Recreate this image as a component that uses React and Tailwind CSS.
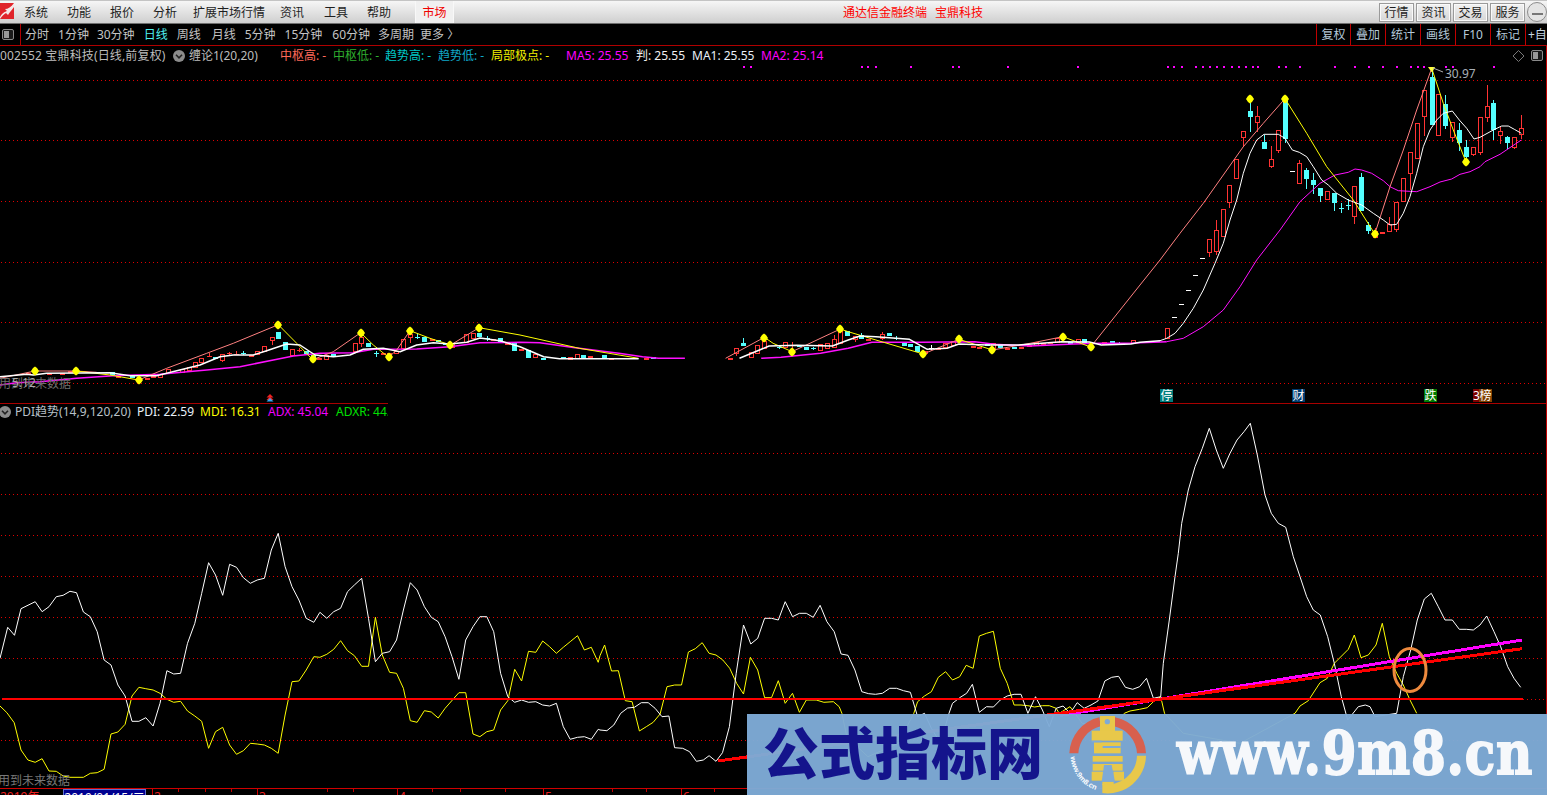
import React from "react";

const z4 = (p) => p.map(([x, y]) => [1140 + x / 3, 60 + y / 3]);
const z5 = (p) => p.map(([x, y]) => [x / 3, 310 + y / 3]);
const z6 = (p) => p.map(([x, y]) => [520 + x / 2.529, 310 + y / 3]);
const z10 = (p) => p.map(([x, y]) => [1140 + x / 3, 380 + y / 3]);
const z11 = (p) => p.map(([x, y]) => [x / 2.613, 410 + y / 3]);
const z12 = (p) => p.map(([x, y]) => [600 + x / 2.613, 570 + y / 3]);
const str = (p) => p.map(([x, y]) => `${x.toFixed(1)},${y.toFixed(1)}`).join(" ");

/* lower indicator */
const lowerWhite = [
  ...z11([[0,745],[20,652],[38,676],[55,596],[92,575],[110,605],[128,590],[147,560],[165,556],[183,544],[200,548],[218,606],[236,620],[254,665],[272,750],[290,765],[308,825],[327,858],[345,934],[363,934],[381,923],[400,948],[418,880],[436,782],[454,792],[472,790],[490,700],[509,640],[527,550],[545,458],[563,495],[582,556],[600,463],[618,472],[636,503],[654,520],[672,510],[691,505],[709,420],[727,370],[745,470],[763,530],[781,570],[800,625],[820,637],[836,607],[854,625],[872,605],[890,595],[908,545],[926,525],[945,505],[963,625],[981,755],[999,730],[1018,725],[1036,690],[1054,600],[1072,518],[1090,540],[1109,590],[1127,622],[1145,635],[1163,680],[1181,740],[1199,808],[1217,690],[1236,650],[1254,620],[1272,620],[1290,665],[1308,790],[1327,860],[1345,877],[1363,870],[1381,877],[1400,875],[1418,885],[1436,888],[1454,880],[1472,950],[1490,988],[1509,982],[1527,980],[1545,988],[1563,958]]),
  ...z12([[0,480],[18,482],[36,465],[54,430],[72,414],[90,412],[108,398],[126,398],[144,415],[162,440],[180,438],[195,533],[216,535],[234,545],[252,574],[270,570],[285,557],[303,574],[320,548],[338,470],[356,310],[375,165],[394,222],[412,205],[430,145],[448,145],[466,150],[484,95],[503,140],[521,130],[539,130],[557,142],[575,106],[593,155],[612,185],[630,252],[648,256],[666,300],[684,365],[702,371],[720,373],[738,370],[757,355],[775,355],[793,362],[811,367],[830,440],[848,430],[866,475],[890,520],[912,430],[921,400],[940,383],[958,370],[973,343],[991,427],[1010,410],[1028,411],[1046,390],[1064,378],[1082,373],[1100,373],[1118,430],[1138,380],[1156,420],[1174,470],[1192,415],[1210,408],[1228,430],[1247,398],[1265,415],[1283,405],[1301,393],[1319,333],[1337,322],[1355,319],[1373,352],[1392,358],[1410,350],[1428,325],[1446,385],[1465,380]]),
  ...z10([[70,850],[88,720],[105,590],[115,520],[125,430],[145,330],[165,260],[187,205],[208,145],[229,210],[250,265],[270,220],[291,180],[312,155],[331,130],[352,225],[375,345],[394,400],[415,430],[437,442],[460,530],[480,590],[500,650],[520,690],[541,705],[563,770],[583,850],[604,950],[623,1020],[655,980],[676,975],[690,980],[705,1010],[770,1000],[790,890],[812,810],[832,720],[853,657],[874,640],[895,680],[915,720],[937,720],[958,748],[979,748],[1000,750],[1020,735],[1040,708],[1062,755],[1082,800],[1103,860],[1122,895],[1142,922]]),
];
const lowerYellow = [
  ...z11([[0,888],[18,908],[37,938],[55,1020],[73,1050],[92,1057],[110,1046],[128,1083],[147,1084],[165,1098],[183,1102],[218,1102],[236,1090],[254,1088],[272,1078],[290,972],[308,966],[327,943],[345,858],[363,832],[381,836],[400,840],[418,850],[436,868],[454,877],[472,874],[490,903],[509,918],[527,934],[545,1015],[563,965],[582,952],[600,1005],[618,1033],[636,1022],[654,1000],[672,1002],[691,1005],[709,1015],[727,1030],[745,915],[763,815],[781,813],[800,780],[820,740],[836,742],[854,733],[872,718],[890,692],[908,722],[926,737],[945,769],[963,769],[981,622],[999,735],[1018,787],[1036,790],[1054,835],[1072,932],[1090,937],[1109,902],[1127,906],[1145,924],[1163,895],[1199,848],[1217,848],[1236,972],[1254,980],[1272,965],[1290,960],[1308,900],[1327,872],[1345,778],[1363,813],[1381,724],[1400,727],[1418,693],[1436,710],[1454,730],[1472,712],[1490,695],[1509,677],[1527,720],[1545,712],[1563,757]]),
  ...z12([[0,257],[12,225],[30,303],[48,302],[66,392],[84,395],[103,483],[121,470],[139,457],[157,432],[175,350],[195,345],[213,345],[231,246],[249,236],[267,218],[285,250],[303,255],[321,270],[339,295],[357,340],[375,372],[393,262],[412,300],[430,383],[448,383],[466,332],[484,400],[503,370],[521,427],[539,390],[565,390],[585,397],[610,395],[625,410],[632,430],[645,500],[700,560],[780,520],[820,430],[830,395],[848,378],[866,365],[884,322],[903,305],[921,330],[940,320],[957,286],[975,295],[991,198],[1010,190],[1028,184],[1046,295],[1064,340],[1082,405],[1100,405],[1118,407],[1136,411],[1156,407],[1174,407],[1192,415],[1200,430],[1228,410],[1260,460],[1340,480],[1370,430],[1385,423],[1410,418],[1430,413],[1446,395],[1465,380],[1475,430]]),
  ...z10([[130,1060],[300,1090],[465,1000],[480,978],[505,962],[540,908],[562,895],[583,850],[625,808],[643,765],[663,833],[685,825],[708,795],[727,730],[748,830],[770,880],[790,915],[810,960],[830,1000]]),
];

/* upper chart lines: left side is drawn heavier than the right */
const upWhiteLeft = [
  z5([[0,200],[80,193],[100,195],[140,190],[330,188],[390,197],[470,197],[500,190],[600,165],[660,140],[700,135],[760,135],[800,122],[860,102],[900,105],[945,135],[1000,140],[1050,135],[1090,118],[1150,115],[1200,125],[1250,105],[1300,98],[1350,102],[1400,97],[1440,84],[1500,92],[1560,110]]).concat(
    z6([[60,140],[100,146],[230,146],[300,146]])),
  z6([[555,145],[630,108],[700,106],[790,108],[830,90],[860,78],[900,80],[985,88],[1030,118],[1080,115],[1110,102],[1180,105],[1260,105],[1370,95],[1440,96],[1470,105],[1545,102]]).concat(
    z4([[0,847],[60,842]])),
];
const upWhiteRight = z4([[60,842],[80,835],[105,820],[130,790],[160,745],[190,690],[225,610],[250,550],[270,480],[290,420],[310,340],[330,280],[350,240],[372,223],[415,223],[435,235],[457,270],[478,277],[500,290],[520,320],[545,360],[565,375],[590,400],[625,420],[665,435],[700,460],[730,480],[750,495],[770,493],[790,460],[810,410],[830,340],[850,260],[870,210],[890,180],[910,160],[937,153],[958,180],[980,205],[1002,237],[1020,232],[1060,210],[1085,198],[1105,198],[1123,208],[1144,220]]);
const upMagentaLeft = [
  z5([[0,225],[50,218],[120,215],[230,205],[340,197],[480,193],[620,180],[720,170],[820,150],[880,138],[960,130],[1060,128],[1120,118],[1250,117],[1350,110],[1440,98]]).concat(
    z6([[0,97],[50,98],[130,112],[250,130],[310,140],[350,145],[417,145]])),
  z6([[610,145],[660,142],[760,130],[830,115],[890,97],[1015,97],[1150,95],[1200,103],[1290,108],[1400,102],[1470,100],[1545,100]]).concat(
    z4([[0,848],[80,845]])),
];
const upMagentaRight = z4([[80,845],[130,835],[190,800],[250,750],[300,680],[350,600],[420,510],[480,425],[540,370],[585,345],[625,337],[645,327],[665,330],[695,340],[730,362],[750,380],[775,392],[830,395],[870,380],[900,366],[935,357],[960,343],[990,335],[1020,320],[1035,305],[1080,283],[1144,240]]);
const upPink = [
  z5([[0,205],[105,183],[228,183],[290,187]]),
  z5([[416,210],[500,175],[620,130],[700,100],[835,44]]),
  z5([[938,149],[1000,125],[1082,68]]),
  z5([[1166,142],[1190,120],[1230,62]]),
  z5([[1352,105],[1437,53]]),
  z6([[520,145],[618,82]]),
  z6([[688,125],[810,57]]),
  z6([[1020,132],[1110,88]]),
  z6([[1195,120],[1290,100],[1373,80]]),
  z6([[1443,111]]).concat(z4([[0,675],[60,600],[120,520],[190,430],[250,345],[310,260],[370,190],[435,116]])),
  z4([[705,520],[750,380],[790,270],[830,150],[875,25]]),
];
const upYellow = [
  z5([[228,183],[330,195],[416,210]]),
  z5([[835,44],[890,100],[938,149]]),
  z5([[1082,68],[1120,105],[1166,142]]),
  z5([[1230,62],[1290,85],[1352,105]]),
  z5([[1437,53],[1560,75]]).concat(z6([[150,115],[300,145]])),
  z6([[618,82],[640,100],[688,125]]),
  z6([[810,57],[830,65],[900,90],[1020,132]]),
  z6([[1110,88],[1195,120]]),
  z6([[1373,80],[1443,111]]),
  z4([[435,116],[500,220],[560,320],[640,420],[705,523]]),
  z4([[875,25],[910,130],[940,210],[978,306]]),
];

/* candles: [X, top, bottom, type, wickTop, wickBottom] */
const c4 = [
  [82,805,835,"r"],[101,772,772,"w"],[122,733,733,"w"],[143,691,691,"w"],[164,646,646,"w"],[185,595,595,"w"],
  [208,538,575,"r",538,590],[229,511,572,"r",480,585],[250,448,527,"r"],[268,376,425,"r",376,445],[289,298,353,"r"],
  [310,214,230,"r",214,262],[331,153,171,"c",116,216],[352,169,185,"r",138,215],[373,246,267,"c",225,267],
  [394,298,317,"r",258,323],[415,211,269,"r",210,278],[436,116,238,"c",116,250],[457,334,334,"w"],[478,310,370,"r",300,370],
  [499,330,357,"c",325,387],[520,360,375,"c",340,402],[541,385,408,"c",385,426],[562,394,416,"r"],[583,400,429,"c",400,452],
  [604,443,443,"c",430,458],[625,434,434,"c",418,450],[643,379,467,"r",379,492],[664,351,453,"c",340,453],
  [685,495,513,"c",485,521],[706,512,530,"r",505,530],[727,515,515,"r"],[748,492,512,"r",472,512],[769,427,506,"r",427,515],
  [790,355,422,"r"],[811,275,338,"r",275,390],[832,188,293,"r"],[853,91,169,"r",91,228],[875,51,194,"c",30,194],
  [895,103,224,"r"],[916,133,197,"c",105,207],[937,187,231,"r",187,246],[958,210,248,"c",190,272],[979,261,292,"c",240,300],
  [1000,260,281,"r",260,288],[1021,172,275,"r",172,285],[1040,139,172,"r",75,185],[1060,129,210,"c",120,240],
  [1081,214,226,"r",202,252],[1102,232,250,"c",228,268],[1123,230,262,"r",230,266],[1144,203,223,"r",165,238],
];
const c5 = [
  [85,190,190,"r"],[148,190,190,"r"],[185,188,188,"r"],[210,184,184,"r"],[290,186,186,"w"],[335,186,195,"c"],[355,198,198,"r"],
  [397,195,205,"c"],[440,205,205,"r"],[460,197,197,"r"],[480,192,200,"r"],[503,178,188,"r"],[545,178,186,"r"],[566,170,180,"r"],
  [584,157,170,"r"],[604,145,155,"r"],[626,138,138,"r",130,142],[646,140,148,"c"],[667,133,150,"r",133,155],[688,130,130,"r",125,135],
  [709,132,132,"r",122,135],[730,130,130,"c",124,136],[752,135,135,"r"],[772,122,132,"r"],[793,109,122,"r"],[815,80,90,"r",80,105],
  [835,65,87,"c"],[856,97,120,"c"],[877,118,135,"r"],[898,120,120,"r",114,126],[919,122,132,"c"],[940,135,150,"c"],[958,143,143,"r"],
  [979,135,146,"r"],[1000,132,132,"c"],[1064,100,123,"r"],[1084,80,100,"r",80,110],[1105,98,112,"c"],[1127,130,130,"c",123,140],
  [1148,130,130,"r"],[1168,130,140,"r"],[1189,122,130,"r"],[1210,88,113,"r"],[1231,72,82,"r",72,100],[1252,80,80,"c",73,87],
  [1273,80,95,"c"],[1295,88,88,"r"],[1315,90,97,"c"],[1335,100,106,"c"],[1355,100,112,"r"],[1397,73,95,"r"],[1418,68,85,"r"],
  [1438,70,80,"c"],[1460,85,85,"c",79,92],[1480,86,86,"r"],[1501,85,95,"c"],[1522,98,98,"r"],[1543,95,122,"c"],
];
const c6 = [
  [3,118,118,"r"],[21,120,143,"c"],[39,133,140,"r"],[57,143,143,"c"],[109,140,147,"c"],[127,140,147,"r"],[145,132,143,"r"],
  [160,136,143,"c"],[178,139,139,"r"],[213,135,147,"c"],[231,144,144,"r"],[319,145,145,"r"],[337,142,146,"c"],
  [530,143,148,"r"],[547,115,130,"r",115,137],[565,98,108,"c",85,108],[583,125,140,"r"],[600,106,130,"r"],[618,93,114,"r"],
  [654,110,110,"c",104,118],[671,97,112,"r"],[688,105,105,"r",97,130],[706,104,110,"c"],[724,110,120,"c"],[742,115,115,"c",110,120],
  [759,102,120,"r"],[777,100,113,"r"],[795,87,110,"r",75,110],[810,60,100,"r"],[828,62,78,"c"],[846,78,86,"r",78,95],[863,76,87,"c",70,87],
  [881,86,86,"r"],[916,73,85,"r",65,90],[934,70,79,"c"],[952,85,85,"c",79,90],[970,95,107,"c"],[987,103,110,"c"],[1005,108,127,"c"],
  [1023,122,130,"r"],[1040,113,113,"w",105,120],[1058,115,115,"r"],[1076,100,110,"r"],[1094,93,105,"r"],[1145,108,108,"r"],
  [1162,110,110,"r"],[1180,103,108,"c"],[1197,100,115,"r"],[1215,105,113,"c"],[1232,113,113,"r"],[1250,110,110,"c"],[1268,110,110,"r"],
  [1286,105,105,"r"],[1304,95,105,"r"],[1322,98,98,"r"],[1340,95,95,"r"],[1357,85,97,"r"],[1392,95,95,"c"],[1410,88,96,"r"],
  [1427,87,100,"c"],[1478,96,103,"r"],[1496,93,100,"c"],[1514,100,100,"c",96,104],[1550,91,100,"r"],
];

const RED = "#ff3333", CY = "#54ffff";
function Candle({ d, map }) {
  const [X, t, b, type, wt, wb] = d;
  const [[x0, y1], [, y2]] = map([[X, t], [X, b]]);
  const x = Math.round(x0) + 0.5;
  const top = Math.round(y1), bot = Math.round(y2);
  const col = type === "r" ? RED : type === "c" ? CY : "#ffffff";
  const wick = wt !== undefined ? map([[X, wt], [X, wb]]) : null;
  return (
    <g shapeRendering="crispEdges">
      {wick && <line x1={x} x2={x} y1={Math.round(wick[0][1])} y2={Math.round(wick[1][1])} stroke={col} />}
      {top === bot ? (
        <rect x={x - 2.5} y={top} width={5} height={type === "w" ? 1 : wick ? 1 : 2} fill={col} />
      ) : type === "c" ? (
        <rect x={x - 2.5} y={top} width={5} height={bot - top} fill={col} />
      ) : (
        <rect x={x - 2} y={top + 0.5} width={4} height={bot - top} fill="#000" stroke={col} />
      )}
    </g>
  );
}

const diamonds = [[35,371],[76,371],[139,380],[278,325],[313,359],[361,333],[389,357],[410,331],[450,345],[479,328],[764,338],[792,352],[840,329],[923,354],[959,339],[992,350],[1063,337],[1091,347],[1250,99],[1285,99],[1375,234],[1466,162]];
const magentaDots = [743,750,861,867,875,910,952,958,1007,1077,1167,1173,1181,1195,1202,1209,1216,1223,1231,1238,1245,1252,1257,1278,1285,1299,1334,1354,1368,1382,1396,1410,1417,1423,1445,1452,1493];
const upperGrid = [80, 140, 201, 262, 322];
const lowerGrid = [453, 494, 535, 576, 617, 658, 740];

const Dotted = ({ y, x1 = 1, x2 = 1545 }) => (
  <line x1={x1} x2={x2} y1={y + 0.5} y2={y + 0.5} stroke="#e00000" strokeDasharray="1 3" shapeRendering="crispEdges" />
);
const Poly = ({ pts, color, w = 1 }) => (
  <polyline points={str(pts)} fill="none" stroke={color} strokeWidth={w} strokeLinejoin="round" />
);

const CircleChevron = ({ className }) => (
  <svg width="12" height="12" viewBox="0 0 12 12" className={className}>
    <circle cx="6" cy="6" r="6" fill="#8c8c8c" />
    <path d="M3 4.8 L6 7.8 L9 4.8" fill="none" stroke="#222" strokeWidth="1.6" />
  </svg>
);
const PanelIcon = ({ className }) => (
  <svg width="12" height="11" viewBox="0 0 12 11" className={className}>
    <rect x="0.5" y="0.5" width="11" height="10" rx="1.5" fill="#1a1a1a" stroke="#8a8a8a" />
    <rect x="2" y="2" width="5" height="7" fill="#9a9a9a" />
  </svg>
);

function TopBar() {
  const menu = [["系统", "w-[43px]"], ["功能", "w-[43px]"], ["报价", "w-[43px]"], ["分析", "w-[40px]"], ["扩展市场行情", "w-[87px]"], ["资讯", "w-[44px]"], ["工具", "w-[43px]"], ["帮助", "w-[49px]"]];
  return (
    <div className="h-[24px] flex items-stretch border-t border-b border-t-[#c4c4c4] border-b-[#6e6e6e] bg-gradient-to-b from-[#f6f6f6] to-[#cfcfcf] text-[12px] text-[#1e1e1e]">
      <svg width="14" height="16" viewBox="0 0 14 16" className="mt-[2px] mr-[10px] shrink-0">
        <rect width="14" height="16" fill="#e0242a" />
        <path d="M0 14 C3 9 5 9 7 8 L5 6 C8 6 11 4 14 0 L14 4 C11 8 9 10 8 12 L6 10 C4 11 2 13 0 16 Z" fill="#f4e8e8" />
      </svg>
      {menu.map(([t, w]) => (
        <div key={t} className={`${w} shrink-0 flex items-center pt-[2px]`}>{t}</div>
      ))}
      <div className="w-[39px] shrink-0 -ml-[1px] flex items-center justify-center pt-[2px] border-x border-[#f8f8f8] bg-[#f0f0f0] text-[#f00000]">市场</div>
      <div className="ml-[389px] flex items-center pt-[2px] text-[#ff0000] shrink-0">
        <span>通达信金融终端</span>
        <span className="ml-[8px]">宝鼎科技</span>
      </div>
      <div className="flex-1" />
      <div className="flex items-center gap-[2px] shrink-0 pt-[1px]">
        {["行情", "资讯", "交易", "服务"].map((t) => (
          <div key={t} className="w-[35px] h-[19px] flex items-center justify-center border border-[#9a9a9a] bg-gradient-to-b from-[#f2f2f2] to-[#d6d6d6] shadow-[inset_0_0_0_1px_#fafafa]">{t}</div>
        ))}
      </div>
      <div className="ml-[2px] mt-[1px] w-[20px] h-[20px] shrink-0 rounded-full border border-[#8c8c8c] bg-[#e4e4e4] flex items-center justify-center">
        <div className="mt-[4px] w-[11px] h-[2px] bg-[#777]" />
      </div>
    </div>
  );
}

function Toolbar() {
  const left = [["分时", ""], ["1分钟", ""], ["30分钟", "-ml-[1px]"], ["日线", "text-[#4ff0f0]"], ["周线", ""], ["月线", "ml-[2px]"], ["5分钟", ""], ["15分钟", ""], ["60分钟", "ml-[1px]"], ["多周期", "-ml-[1px]"], ["更多 〉", "-ml-[3px]"]];
  const right = [["复权", "w-[34px]"], ["叠加", "w-[35px]"], ["统计", "w-[35px]"], ["画线", "w-[35px]"], ["F10", "w-[35px]"], ["标记", "w-[35px]"]];
  return (
    <div className="h-[22px] flex items-stretch border-b border-[#b00000] text-[12px] bg-black">
      <div className="w-[21px] shrink-0 flex items-center pl-[2px] border-r border-[#b00000]">
        <PanelIcon />
      </div>
      <div className="ml-[4px] flex items-center gap-[9px] text-[#c4c4c4]">
        {left.map(([t, c]) => (
          <span key={t} className={c}>{t}</span>
        ))}
      </div>
      <div className="flex-1" />
      {right.map(([t, w]) => (
        <div key={t} className={`${w} shrink-0 flex items-center justify-center border-l border-[#c00000] text-[#b4c8d8]`}>{t}</div>
      ))}
      <div className="w-[22px] shrink-0 overflow-hidden whitespace-nowrap flex items-center pl-[2px] border-l border-[#c00000] text-[#c4d4e0]">+自选</div>
    </div>
  );
}

function UpperChart() {
  const legend = [
    ["中枢高: -", "#ff6a5a", 53],
    ["中枢低: -", "#2fae2f", 52],
    ["趋势高: -", "#00c8c8", 53],
    ["趋势低: -", "#10a8c8", 53],
    ["局部极点: -", "#f0f000", 75],
  ];
  return (
    <div className="relative h-[358px] overflow-hidden">
      <svg width="1547" height="358" viewBox="0 46 1547 358" className="absolute inset-0">
        {upperGrid.map((y) => <Dotted key={y} y={y} />)}
        <Dotted y={383} x2={387} />
        <Dotted y={383} x1={1160} />
        <line x1="0" x2="388" y1="403.5" y2="403.5" stroke="#a80000" />
        <line x1="1160" x2="1547" y1="403.5" y2="403.5" stroke="#a80000" />
        <line x1="1546.5" x2="1546.5" y1="46" y2="404" stroke="#c00000" />
        {magentaDots.map((x) => <rect key={x} x={x} y={66} width={2} height={2} fill="#ff00ff" />)}
        {c5.map((d, i) => <Candle key={"a" + i} d={d} map={z5} />)}
        {c6.map((d, i) => <Candle key={"b" + i} d={d} map={z6} />)}
        {c4.map((d, i) => <Candle key={"c" + i} d={d} map={z4} />)}
        {upMagentaLeft.map((p, i) => <Poly key={"m" + i} pts={p} color="#ff10ff" w={1.5} />)}
        <Poly pts={upMagentaRight} color="#ff10ff" />
        {upPink.map((p, i) => <Poly key={"p" + i} pts={p} color="#ff8080" />)}
        {upYellow.map((p, i) => <Poly key={"y" + i} pts={p} color="#ffff00" />)}
        {upWhiteLeft.map((p, i) => <Poly key={"w" + i} pts={p} color="#ffffff" w={1.5} />)}
        <Poly pts={upWhiteRight} color="#ffffff" />
        {diamonds.map(([x, y]) => (
          <path key={x} d={`M${x} ${y - 4.5} L${x + 2} ${y - 3} L${x + 4} ${y} L${x + 2} ${y + 3} L${x} ${y + 4.5} L${x - 2} ${y + 3} L${x - 4} ${y} L${x - 2} ${y - 3} Z`} fill="#ffff00" />
        ))}
        <path d="M1428 67 L1435 67 L1432.5 72 L1431.5 72 Z" fill="#ffff40" />
        <polyline points="1433,68 1443,72" fill="none" stroke="#b0b0b0" />
        <path d="M270 394 L273.5 397.5 L266.5 397.5 Z" fill="#f02020" />
        <path d="M270 396.5 L273.5 400 L266.5 400 Z" fill="#f02020" />
        <path d="M270 398 L273.5 401.5 L266.5 401.5 Z" fill="#38a8f0" />
        <path d="M1518.5 50.5 L1524 56 L1518.5 61.5 L1513 56 Z" fill="none" stroke="#777" />
      </svg>

      <div className="relative h-[19px] flex items-center text-[12px] whitespace-nowrap">
        <span className="w-[173px] shrink-0 text-[#bdbdbd] tracking-[0.15px]">002552 宝鼎科技(日线,前复权)</span>
        <CircleChevron className="shrink-0" />
        <span className="w-[91px] shrink-0 ml-[4px] text-[#bdbdbd]">缠论1(20,20)</span>
        {legend.map(([t, c, w]) => (
          <span key={t} style={{ color: c, width: w }} className="shrink-0">{t}</span>
        ))}
        <span className="w-[70px] shrink-0 text-[#ff00ff]">MA5: 25.55</span>
        <span className="w-[56px] shrink-0 text-[#f0f0f0]">判: 25.55</span>
        <span className="w-[69px] shrink-0 text-[#e8f0f8]">MA1: 25.55</span>
        <span className="shrink-0 text-[#ff00ff]">MA2: 25.14</span>
        <div className="flex-1" />
        <PanelIcon className="mr-[4px] shrink-0" />
      </div>

      <span className="absolute left-[1445px] top-[19px] text-[12px] text-[#a8b0b8]">30.97</span>
      <span className="absolute left-[-1px] top-[329px] text-[12px] text-[#6e6e6e] whitespace-nowrap">用到未来数据</span>
      <span className="absolute left-[12px] top-[328px] text-[12px] text-[#a8a8a8]">5.12</span>

      <span className="absolute left-[1160px] top-[343px] w-[13px] h-[13px] bg-[#007c7c] text-white text-[12px] leading-[13px] text-center">停</span>
      <span className="absolute left-[1292px] top-[343px] w-[13px] h-[13px] bg-[#003c70] text-white text-[12px] leading-[13px] text-center">财</span>
      <span className="absolute left-[1424px] top-[343px] w-[13px] h-[13px] bg-[#007a00] text-white text-[12px] leading-[13px] text-center">跌</span>
      <span className="absolute left-[1473px] top-[343px] flex h-[13px] text-white text-[12px] leading-[13px]">
        <span className="w-[6px] bg-[#7c0000] overflow-hidden">3</span>
        <span className="w-[13px] bg-[#804000] text-center">榜</span>
      </span>
    </div>
  );
}

function LowerChart() {
  return (
    <div className="relative h-[384px] overflow-hidden">
      <svg width="1547" height="384" viewBox="0 404 1547 384" className="absolute inset-0">
        {lowerGrid.map((y) => <Dotted key={y} y={y} />)}
        <Dotted y={699} x1={1523} />
        <line x1="1546.5" x2="1546.5" y1="404" y2="788" stroke="#c00000" />
        <Poly pts={lowerYellow} color="#ffff00" />
        <Poly pts={lowerWhite} color="#ffffff" />
        <g shapeRendering="crispEdges">
          <line x1="1060" y1="715.5" x2="1522" y2="640" stroke="#ff00ff" strokeWidth="3" />
          <line x1="718" y1="761" x2="1522" y2="648.7" stroke="#ff0000" strokeWidth="3" />
          <line x1="2" x2="1523" y1="699" y2="699" stroke="#ff0000" strokeWidth="2" />
        </g>
        <ellipse cx="1410" cy="670" rx="16" ry="21.5" fill="none" stroke="#ee8a3e" strokeWidth="3" />
      </svg>
      <div className="relative h-[16px] w-[388px] overflow-hidden flex items-center text-[12px] whitespace-nowrap">
        <CircleChevron className="shrink-0 ml-[-1px]" />
        <span className="ml-[4px] w-[122px] shrink-0 text-[#b8c0c8]">PDI趋势(14,9,120,20)</span>
        <span className="w-[63px] shrink-0 text-[#e8f0f8]">PDI: 22.59</span>
        <span className="w-[68px] shrink-0 text-[#ffff00]">MDI: 16.31</span>
        <span className="w-[68px] shrink-0 text-[#f000ff]">ADX: 45.04</span>
        <span className="shrink-0 text-[#00e000]">ADXR: 44.38</span>
      </div>
      <span className="absolute left-[-2px] top-[368px] text-[12px] text-[#787878] whitespace-nowrap">用到未来数据</span>
    </div>
  );
}

function DateAxis() {
  const ticks = [178, 205, 231, 327, 353, 432, 460, 505, 612, 646, 714];
  return (
    <div className="relative h-[7px] border-t border-[#d00000] flex text-[12px] leading-[15px] text-[#f02020] overflow-hidden whitespace-nowrap">
      <span className="w-[63px] shrink-0">2019年</span>
      <span className="w-[83px] shrink-0 h-[16px] bg-[#000090] border border-[#6070d0] text-center text-white">2019/01/15/二</span>
      <span className="w-[6px] shrink-0" />
      {[["2", 105], ["3", 140], ["4", 146], ["5", 138], ["6", 66]].map(([t, w]) => (
        <span key={t} style={{ width: w }} className="shrink-0 border-l border-[#d00000] pl-[1px]">{t}</span>
      ))}
      {ticks.map((x) => (
        <span key={x} style={{ left: x }} className="absolute top-0 h-[3px] w-px bg-[#c00000]" />
      ))}
    </div>
  );
}

function Watermark() {
  return (
    <div className="absolute left-[747px] top-[714px] w-[800px] h-[81px] bg-[#7eaad6]/[0.97] flex items-start overflow-hidden">
      <div className="ml-[16px] mt-[2px] w-[278px] shrink-0 text-[#14148c] text-[56px] leading-[68px] font-black whitespace-nowrap font-['Noto_Sans_CJK_SC',sans-serif]">公式指标网</div>
      <svg width="80" height="81" viewBox="54 12 240 243" className="ml-[27px] shrink-0">
        <path d="M58 130 A115 115 0 0 1 148 22 L152 49 A88 88 0 0 0 85 130 Z" fill="#d8604e" />
        <path d="M195 22 A115 115 0 0 1 288 130 L261 130 A88 88 0 0 0 192 49 Z" fill="#d8604e" />
        <path d="M288 137 A115 115 0 0 1 157 249 L157 222 A88 88 0 0 0 261 137 Z" fill="#e8c84a" />
        <g fill="#e8c84a">
          <rect x="150" y="18" width="45" height="46" />
          <rect x="125" y="62" width="93" height="30" />
          <rect x="132" y="97" width="80" height="33" />
          <rect x="128" y="138" width="90" height="17" />
          <rect x="128" y="162" width="90" height="20" />
          <rect x="125" y="185" width="35" height="27" />
          <rect x="190" y="185" width="32" height="27" />
          <rect x="157" y="215" width="34" height="10" />
        </g>
        <circle cx="172" cy="35" r="8" fill="#7eaad6" />
        <rect x="125" y="92" width="30" height="5" fill="#7eaad6" />
        <rect x="158" y="108" width="54" height="6" fill="#7eaad6" />
        <path d="M162 165 L185 165 L195 215 L155 215 Z" fill="#7eaad6" />
        <defs>
          <path id="arcText" d="M62 140 A112 112 0 0 0 152 244" />
        </defs>
        <text fill="#ffffff" fontSize="22" fontWeight="700" fontFamily="'Liberation Sans',sans-serif">
          <textPath href="#arcText">www.9m8.cn</textPath>
        </text>
      </svg>
      <div className="ml-[29px] mt-[10px] origin-top scale-y-[1.2] shrink-0 text-[#f6f8fb] text-[50px] leading-[50px] font-bold tracking-[0.8px] whitespace-nowrap [-webkit-text-stroke:1.5px_#f6f8fb] font-['DejaVu_Serif',serif]">www.9m8.cn</div>
    </div>
  );
}

export default function App() {
  return (
    <div className="relative w-[1547px] h-[795px] overflow-hidden bg-black font-['Noto_Sans','Noto_Sans_CJK_SC',sans-serif]">
      <TopBar />
      <Toolbar />
      <UpperChart />
      <LowerChart />
      <DateAxis />
      <Watermark />
    </div>
  );
}
